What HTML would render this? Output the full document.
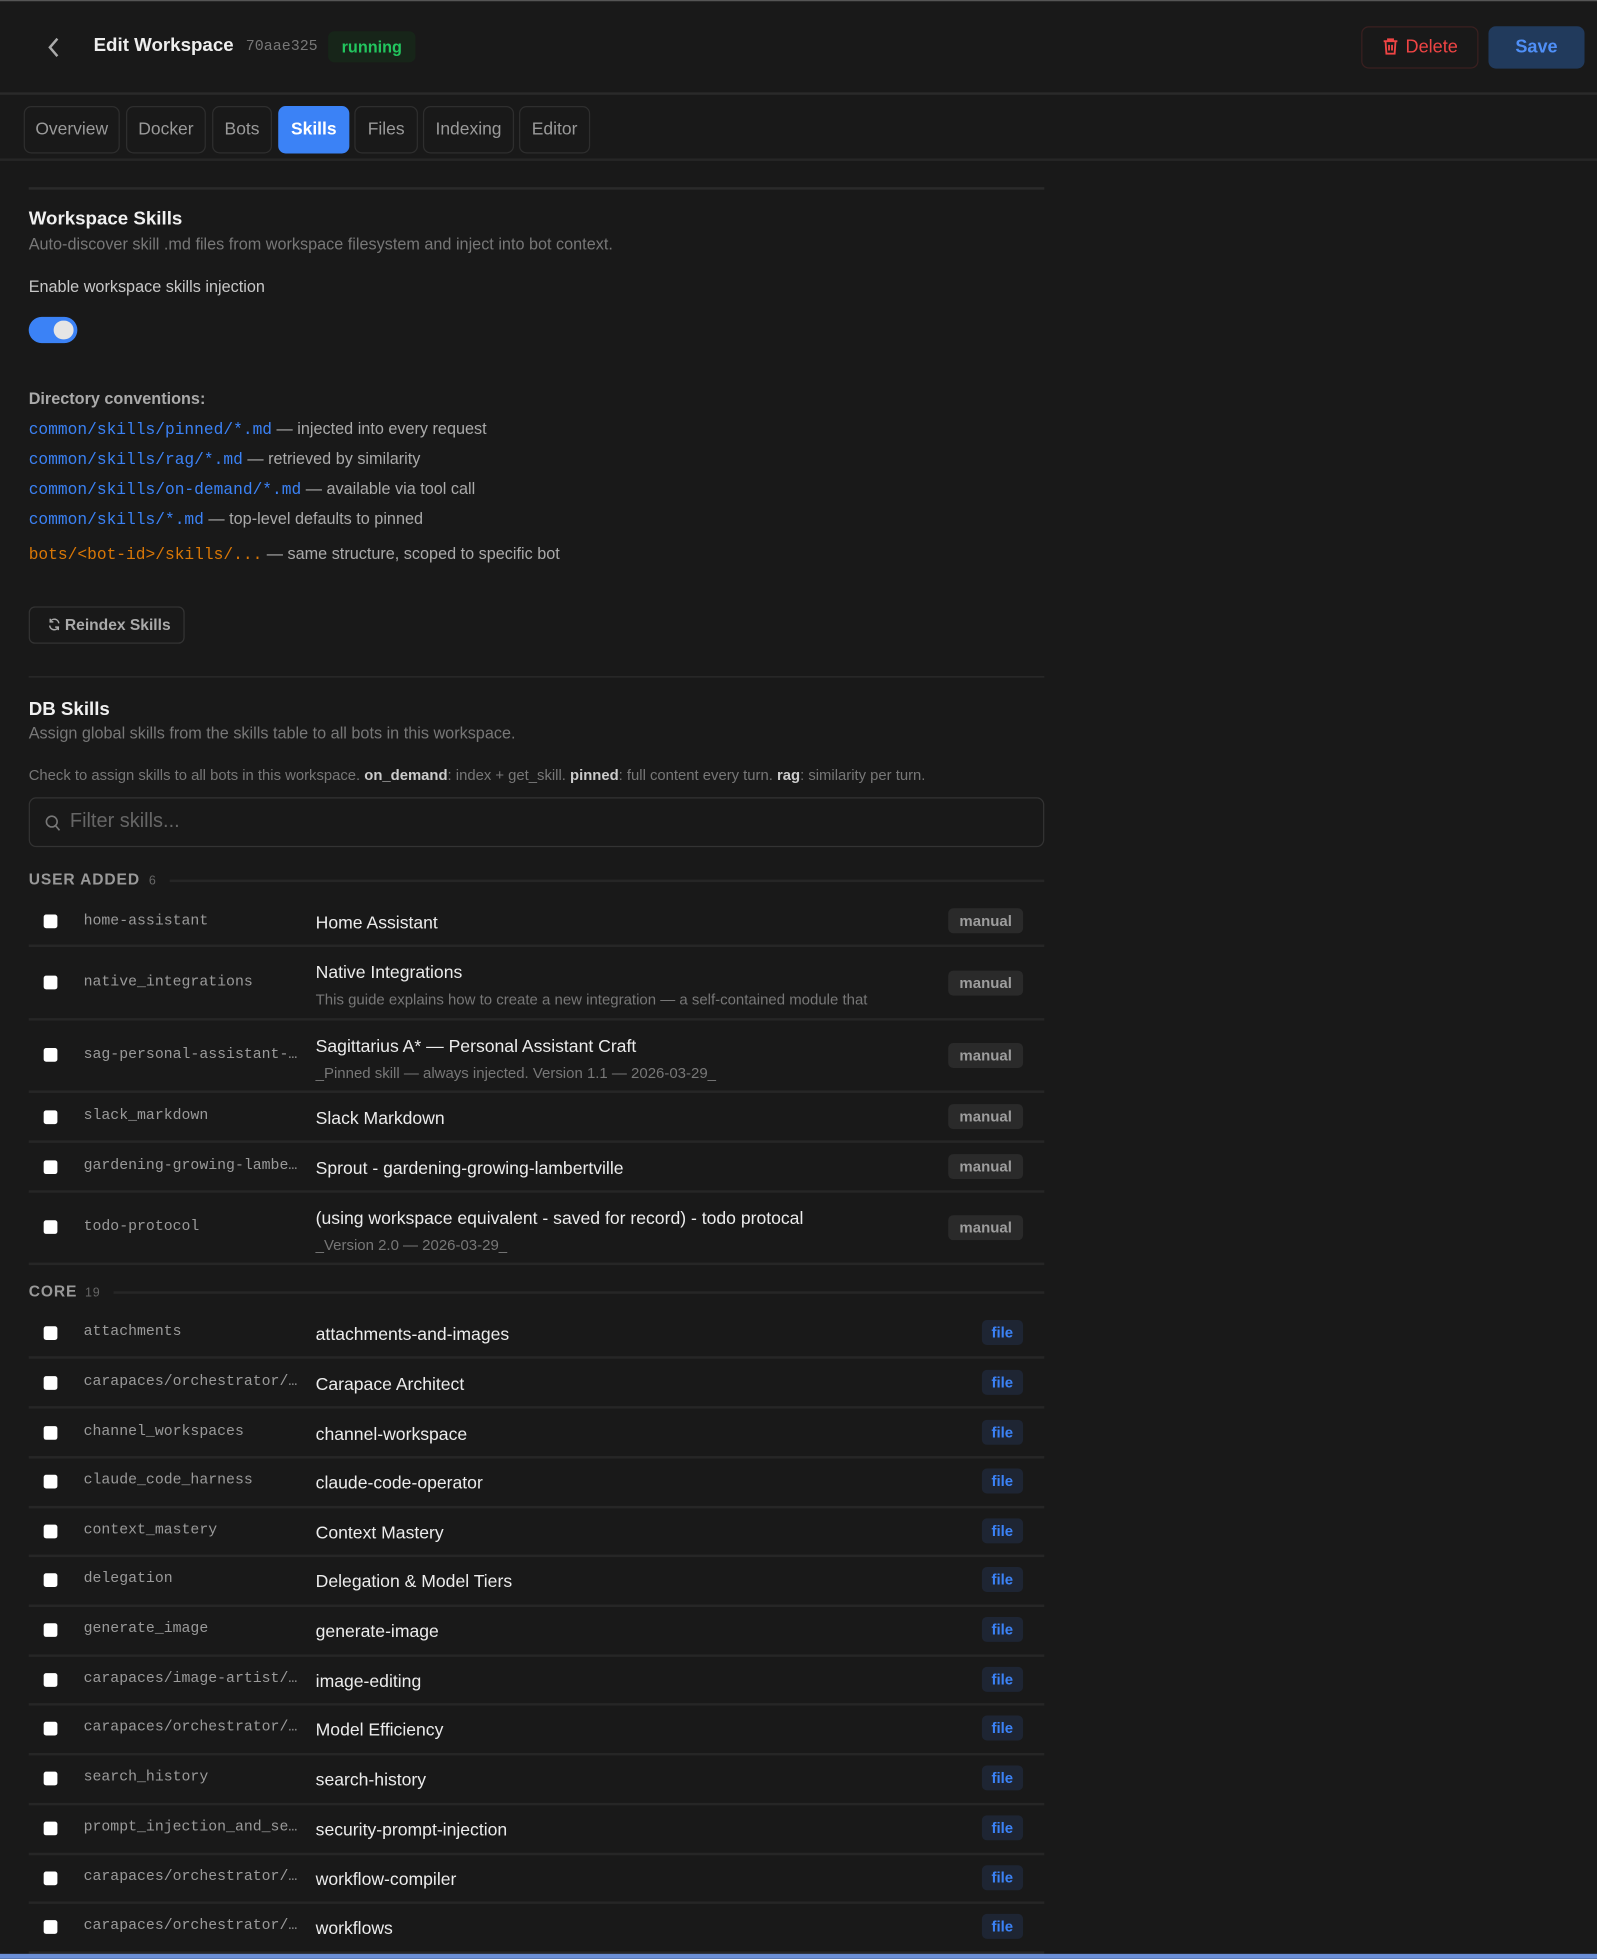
<!DOCTYPE html>
<html><head><meta charset="utf-8"><style>
html,body{margin:0;padding:0;background:#191919;width:1597px;height:1957px;overflow:hidden}
#w{position:absolute;left:0;top:0;width:1280px;height:1569px;transform:scale(1.24766);transform-origin:0 0;font-family:"Liberation Sans",sans-serif;color:#e5e5e5;border-top:1px solid #555;box-sizing:border-box}
.a{position:absolute}
.mono{font-family:"Liberation Mono",monospace}
.tab{position:absolute;top:84px;height:38px;border:1px solid #2e2e2e;border-radius:6px;box-sizing:border-box;color:#9a9a9a;font-size:14px;line-height:34px;text-align:center}
.hr{position:absolute;left:23px;width:814px;height:1px;background:#2c2c2c}
.blue{color:#3b82f6}
.dl{position:absolute;left:23px;font-size:13px;color:#aaa;line-height:16px;white-space:nowrap}
.dl .mono{font-size:13px}
.row{position:absolute;left:23px;width:814px;border-bottom:2px solid #262626;box-sizing:border-box}
.cb{position:absolute;left:12px;width:11px;height:11px;background:#fff;border-radius:2px}
.slug{position:absolute;left:44px;font-family:"Liberation Mono",monospace;font-size:11.9px;color:#9a9a9a}
.ttl{position:absolute;left:230px;font-size:14.1px;color:#ececec}
.sub{position:absolute;left:230px;font-size:12px;color:#777}
.bd{position:absolute;right:17px;height:20px;border-radius:4px;font-size:12px;font-weight:bold;line-height:20px;padding:0 9px}
.man{background:#2a2a2a;color:#9d9d9d}
.fil{background:#1e2533;color:#3b82f6;padding:0 8px}
</style></head><body><div id="w">
<svg class="a" style="left:36px;top:28px" width="14" height="18" viewBox="0 0 14 18"><path d="M10 2 L4 9 L10 16" stroke="#aaa" stroke-width="2" fill="none"/></svg>
<div class="a" style="left:75px;top:27px;font-size:15px;font-weight:bold;color:#eee">Edit Workspace</div>
<div class="a mono" style="left:197px;top:29px;font-size:12px;color:#777">70aae325</div>
<div class="a" style="left:263px;top:24px;width:70px;height:25px;background:#172519;border-radius:5px;color:#22c55e;font-size:13px;font-weight:bold;line-height:25px;text-align:center">running</div>
<div class="a" style="left:1091px;top:20px;width:94px;height:34px;border:1px solid #3a2020;border-radius:6px;box-sizing:border-box;color:#ef4444;font-size:14.5px;line-height:32px;text-align:center"><svg width="13" height="14" viewBox="0 0 13 14" style="vertical-align:-2px;margin-right:6px"><path d="M1 3h11M4.5 3V1.5h4V3M2.5 3l.7 10h6.6l.7-10M5.3 6v4.5M7.7 6v4.5" stroke="#ef4444" stroke-width="1.5" fill="none"/></svg>Delete</div>
<div class="a" style="left:1193px;top:20px;width:77px;height:34px;background:#213a5c;border-radius:6px;color:#4f8ff7;font-size:14.5px;font-weight:bold;line-height:34px;text-align:center">Save</div>
<div class="a" style="left:0;top:73px;width:1280px;height:2px;background:#2a2a2a"></div>
<div class="tab" style="left:19px;width:77px">Overview</div>
<div class="tab" style="left:101px;width:64px">Docker</div>
<div class="tab" style="left:170px;width:48px">Bots</div>
<div class="tab" style="left:223px;width:57px;background:#3b82f6;border-color:#3b82f6;color:#fff;font-weight:bold">Skills</div>
<div class="tab" style="left:284px;width:51px">Files</div>
<div class="tab" style="left:339px;width:73px">Indexing</div>
<div class="tab" style="left:416px;width:57px">Editor</div>
<div class="a" style="left:0;top:126px;width:1280px;height:2px;background:#262626"></div>
<div class="hr" style="top:149px;height:2px;background:#2a2a2a"></div>
<div class="a" style="left:23px;top:166px;font-size:15px;font-weight:bold;color:#f0f0f0">Workspace Skills</div>
<div class="a" style="left:23px;top:187px;font-size:13px;color:#777">Auto-discover skill .md files from workspace filesystem and inject into bot context.</div>
<div class="a" style="left:23px;top:221px;font-size:13px;color:#c8c8c8">Enable workspace skills injection</div>
<div class="a" style="left:23px;top:253px;width:39px;height:21px;background:#3b82f6;border-radius:11px"><div class="a" style="left:20px;top:3px;width:16px;height:15px;background:#e5e5e5;border-radius:8px"></div></div>
<div class="a" style="left:23px;top:311px;font-size:13px;font-weight:bold;color:#aaa">Directory conventions:</div>
<div class="dl" style="top:335px"><span class="mono blue">common/skills/pinned/*.md</span> — injected into every request</div>
<div class="dl" style="top:359px"><span class="mono blue">common/skills/rag/*.md</span> — retrieved by similarity</div>
<div class="dl" style="top:383px"><span class="mono blue">common/skills/on-demand/*.md</span> — available via tool call</div>
<div class="dl" style="top:407px"><span class="mono blue">common/skills/*.md</span> — top-level defaults to pinned</div>
<div class="dl" style="top:435px"><span class="mono" style="color:#d97706">bots/&lt;bot-id&gt;/skills/...</span> — same structure, scoped to specific bot</div>
<div class="a" style="left:23px;top:485px;width:125px;height:30px;border:1px solid #333;border-radius:5px;box-sizing:border-box;font-size:12.5px;font-weight:bold;color:#aaa;line-height:28px;padding-left:14px"><svg width="11" height="11" viewBox="0 0 12 12" style="vertical-align:-1px;margin-right:3px"><path d="M10 5A4 4 0 0 0 2.5 3.5M2 7a4 4 0 0 0 7.5 1.5M2.5 1v2.7h2.7M9.5 11V8.3H6.8" stroke="#aaa" stroke-width="1.3" fill="none"/></svg>Reindex Skills</div>
<div class="hr" style="top:541px"></div>
<div class="a" style="left:23px;top:559px;font-size:15px;font-weight:bold;color:#f0f0f0">DB Skills</div>
<div class="a" style="left:23px;top:579px;font-size:13px;color:#777">Assign global skills from the skills table to all bots in this workspace.</div>
<div class="a" style="left:23px;top:613px;font-size:11.9px;color:#777">Check to assign skills to all bots in this workspace. <b style="color:#ccc">on_demand</b>: index + get_skill. <b style="color:#ccc">pinned</b>: full content every turn. <b style="color:#ccc">rag</b>: similarity per turn.</div>
<div class="a" style="left:23px;top:638px;width:814px;height:40px;border:1px solid #333;border-radius:6px;box-sizing:border-box"><svg class="a" style="left:12px;top:13px" width="13" height="14" viewBox="0 0 13 14"><circle cx="5.5" cy="5.5" r="4.3" stroke="#777" stroke-width="1.3" fill="none"/><path d="M8.7 9l3 3.5" stroke="#777" stroke-width="1.3"/></svg><div class="a" style="left:32px;top:10px;font-size:16px;color:#666">Filter skills...</div></div>
<div class="a" style="left:23px;top:697px;font-size:12.5px;font-weight:bold;color:#999;letter-spacing:0.7px">USER ADDED <span style="font-weight:normal;font-size:10px;color:#666;margin-left:3px">6</span></div>
<div class="a" style="left:136px;top:704px;width:701px;height:2px;background:#262626"></div>

<div class="row" style="top:718px;height:40px"><div class="cb" style="top:14px"></div><div class="slug" style="top:12px">home-assistant</div><div class="ttl" style="top:12px">Home Assistant</div><div class="bd man" style="top:9px">manual</div></div>
<div class="row" style="top:758px;height:59px"><div class="cb" style="top:23px"></div><div class="slug" style="top:21px">native_integrations</div><div class="ttl" style="top:12px">Native Integrations</div><div class="sub" style="top:35px">This guide explains how to create a new integration — a self-contained module that</div><div class="bd man" style="top:19px">manual</div></div>
<div class="row" style="top:817px;height:58px"><div class="cb" style="top:22px"></div><div class="slug" style="top:20px">sag-personal-assistant-…</div><div class="ttl" style="top:12px">Sagittarius A* — Personal Assistant Craft</div><div class="sub" style="top:35px">_Pinned skill — always injected. Version 1.1 — 2026-03-29_</div><div class="bd man" style="top:18px">manual</div></div>
<div class="row" style="top:875px;height:40px"><div class="cb" style="top:14px"></div><div class="slug" style="top:11px">slack_markdown</div><div class="ttl" style="top:12px">Slack Markdown</div><div class="bd man" style="top:9px">manual</div></div>
<div class="row" style="top:915px;height:40px"><div class="cb" style="top:14px"></div><div class="slug" style="top:11px">gardening-growing-lambe…</div><div class="ttl" style="top:12px">Sprout - gardening-growing-lambertville</div><div class="bd man" style="top:9px">manual</div></div>
<div class="row" style="top:955px;height:58px"><div class="cb" style="top:22px"></div><div class="slug" style="top:20px">todo-protocol</div><div class="ttl" style="top:12px">(using workspace equivalent - saved for record) - todo protocal</div><div class="sub" style="top:35px">_Version 2.0 — 2026-03-29_</div><div class="bd man" style="top:18px">manual</div></div>

<div class="a" style="left:23px;top:1027px;font-size:12.5px;font-weight:bold;color:#999;letter-spacing:0.7px">CORE <span style="font-weight:normal;font-size:10px;color:#666;margin-left:2px">19</span></div>
<div class="a" style="left:91px;top:1034px;width:746px;height:2px;background:#262626"></div>

<div class="row" style="top:1048px;height:40px"><div class="cb" style="top:14px"></div><div class="slug" style="top:11px">attachments</div><div class="ttl" style="top:12px">attachments-and-images</div><div class="bd fil" style="top:9px">file</div></div>
<div class="row" style="top:1088px;height:40px"><div class="cb" style="top:14px"></div><div class="slug" style="top:11px">carapaces/orchestrator/…</div><div class="ttl" style="top:12px">Carapace Architect</div><div class="bd fil" style="top:9px">file</div></div>
<div class="row" style="top:1128px;height:40px"><div class="cb" style="top:14px"></div><div class="slug" style="top:11px">channel_workspaces</div><div class="ttl" style="top:12px">channel-workspace</div><div class="bd fil" style="top:9px">file</div></div>
<div class="row" style="top:1168px;height:40px"><div class="cb" style="top:13px"></div><div class="slug" style="top:10px">claude_code_harness</div><div class="ttl" style="top:11px">claude-code-operator</div><div class="bd fil" style="top:8px">file</div></div>
<div class="row" style="top:1207px;height:40px"><div class="cb" style="top:14px"></div><div class="slug" style="top:11px">context_mastery</div><div class="ttl" style="top:12px">Context Mastery</div><div class="bd fil" style="top:9px">file</div></div>
<div class="row" style="top:1247px;height:40px"><div class="cb" style="top:13px"></div><div class="slug" style="top:10px">delegation</div><div class="ttl" style="top:11px">Delegation &amp; Model Tiers</div><div class="bd fil" style="top:8px">file</div></div>
<div class="row" style="top:1287px;height:40px"><div class="cb" style="top:13px"></div><div class="slug" style="top:10px">generate_image</div><div class="ttl" style="top:11px">generate-image</div><div class="bd fil" style="top:8px">file</div></div>
<div class="row" style="top:1326px;height:40px"><div class="cb" style="top:14px"></div><div class="slug" style="top:11px">carapaces/image-artist/…</div><div class="ttl" style="top:12px">image-editing</div><div class="bd fil" style="top:9px">file</div></div>
<div class="row" style="top:1366px;height:40px"><div class="cb" style="top:13px"></div><div class="slug" style="top:10px">carapaces/orchestrator/…</div><div class="ttl" style="top:11px">Model Efficiency</div><div class="bd fil" style="top:8px">file</div></div>
<div class="row" style="top:1406px;height:40px"><div class="cb" style="top:13px"></div><div class="slug" style="top:10px">search_history</div><div class="ttl" style="top:11px">search-history</div><div class="bd fil" style="top:8px">file</div></div>
<div class="row" style="top:1446px;height:40px"><div class="cb" style="top:13px"></div><div class="slug" style="top:10px">prompt_injection_and_se…</div><div class="ttl" style="top:11px">security-prompt-injection</div><div class="bd fil" style="top:8px">file</div></div>
<div class="row" style="top:1485px;height:40px"><div class="cb" style="top:14px"></div><div class="slug" style="top:11px">carapaces/orchestrator/…</div><div class="ttl" style="top:12px">workflow-compiler</div><div class="bd fil" style="top:9px">file</div></div>
<div class="row" style="top:1525px;height:40px"><div class="cb" style="top:13px"></div><div class="slug" style="top:10px">carapaces/orchestrator/…</div><div class="ttl" style="top:11px">workflows</div><div class="bd fil" style="top:8px">file</div></div>
<div class="a" style="left:0;top:1565px;width:1280px;height:4px;background:#6b8fd6"></div>
</div></body></html>
